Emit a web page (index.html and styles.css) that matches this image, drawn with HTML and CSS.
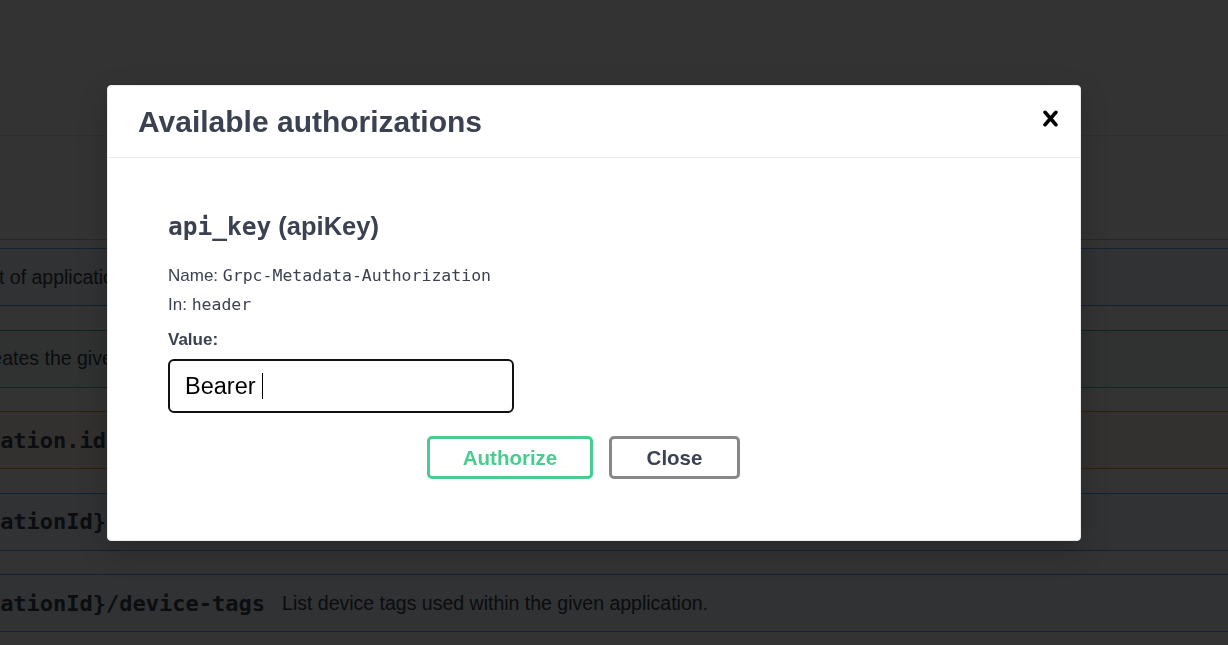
FILE: index.html
```html
<!DOCTYPE html>
<html lang="en">
<head>
<meta charset="utf-8">
<title>Swagger UI - Available authorizations</title>
<link rel="stylesheet" href="styles.css">
</head>
<body>
<div class="page">
  <div class="info"></div>
  <div class="tag"></div>
  <div class="ops">
    <div class="opblock get">
      <span class="method">GET</span>
      <span class="path">/api/applications</span>
      <span class="desc">Get the list of applications.</span>
    </div>
    <div class="opblock post">
      <span class="method">POST</span>
      <span class="path">/api/applications</span>
      <span class="desc">Create creates the given application.</span>
    </div>
    <div class="opblock put">
      <span class="method">PUT</span>
      <span class="path">/api/applications/{application.id}</span>
      <span class="desc">Update updates the given application.</span>
    </div>
    <div class="opblock get">
      <span class="method">GET</span>
      <span class="path">/api/applications/{applicationId}</span>
      <span class="desc">Get returns the application for the given ID.</span>
    </div>
    <div class="opblock get">
      <span class="method">GET</span>
      <span class="path">/api/applications/{applicationId}/device-tags</span>
      <span class="desc">List device tags used within the given application.</span>
    </div>
  </div>
</div>

<div class="backdrop"></div>
<div class="modal-wrap">
  <div class="modal">
    <div class="modal-header">
      <h3 class="modal-title">Available authorizations</h3>
      <button class="close-btn" type="button" aria-label="Close">
        <svg width="31" height="31" viewBox="0 0 20 20" aria-hidden="true">
          <path d="M14.348 14.849c-.469.469-1.229.469-1.697 0L10 11.819l-2.651 3.029c-.469.469-1.229.469-1.697 0-.469-.469-.469-1.229 0-1.697l2.758-3.15-2.759-3.152c-.469-.469-.469-1.228 0-1.697.469-.469 1.228-.469 1.697 0L10 8.183l2.651-3.031c.469-.469 1.228-.469 1.697 0 .469.469.469 1.229 0 1.697l-2.758 3.152 2.758 3.15c.469.469.469 1.229 0 1.698z" fill="#000"/>
        </svg>
      </button>
    </div>
    <div class="modal-body">
      <h4 class="auth-title"><code>api_key</code> (apiKey)</h4>
      <p class="meta first">Name: <code>Grpc-Metadata-Authorization</code></p>
      <p class="meta">In: <code>header</code></p>
      <label class="value-label">Value:</label>
      <div class="value-input"><span>Bearer</span><span class="caret"></span></div>
      <div class="btn-row">
        <button class="btn authorize" type="button">Authorize</button>
        <button class="btn close" type="button">Close</button>
      </div>
    </div>
  </div>
</div>
</body>
</html>
```

FILE: styles.css
```css
html, body {
  margin: 0;
  padding: 0;
  overflow: hidden;
  background: #fff;
  font-family: "Liberation Sans", Arial, sans-serif;
  color: #3b4151;
}

.page {
  width: 100%;
}

.info {
  height: 135px;
  background: #fff;
  box-shadow: 0 1px 2px 0 rgba(0, 0, 0, 0.15);
  position: relative;
}

.tag {
  height: 104px;
  border-bottom: 1px solid rgba(59, 65, 81, 0.3);
}

.ops {
  margin-top: 8px;
  margin-left: -465px;
  margin-right: -40px;
}

.opblock {
  box-sizing: border-box;
  height: 58px;
  margin-bottom: 23.5px;
  display: flex;
  align-items: center;
  padding: 0 7px;
  border: 1px solid;
  border-radius: 5px;
  box-shadow: 0 0 2px rgba(0, 0, 0, 0.12);
  white-space: nowrap;
}

.opblock.get { background: rgba(97, 175, 254, 0.1); border-color: #61affe; }
.opblock.post { background: rgba(73, 204, 144, 0.1); border-color: #49cc90; }
.opblock.put { background: rgba(252, 161, 48, 0.1); border-color: #fca130; }

.method {
  width: 112px;
  flex: none;
  text-align: center;
  color: #fff;
  font-weight: bold;
  font-size: 19.5px;
  padding: 8px 0;
  border-radius: 4px;
}
.get .method { background: #61affe; }
.post .method { background: #49cc90; }
.put .method { background: #fca130; }

.path {
  font-family: "DejaVu Sans Mono", monospace;
  font-weight: bold;
  font-size: 22px;
  padding: 0 17px 0 14px;
  color: #3b4151;
}

.desc {
  font-size: 19.5px;
  color: #3b4151;
}

/* overlay + modal */
.backdrop {
  position: fixed;
  inset: 0;
  background: rgba(0, 0, 0, 0.8);
}

.modal-wrap {
  position: fixed;
  inset: 0;
  padding: 85px 0 0 107px;
}

.modal {
  box-sizing: border-box;
  width: 974px;
  background: #fff;
  border: 1px solid #ebebeb;
  border-radius: 4px;
  box-shadow: 0 10px 30px 0 rgba(0, 0, 0, 0.2);
}

.modal-header {
  height: 71px;
  display: flex;
  align-items: center;
  justify-content: space-between;
  padding: 0 14px 0 30px;
  border-bottom: 1px solid #ebebeb;
}

.modal-title {
  margin: 0;
  font-size: 30px;
  line-height: 34px;
  font-weight: bold;
  color: #3b4151;
}

.close-btn {
  border: none;
  background: none;
  padding: 0;
  margin: 0 0 6px 0;
  width: 31px;
  height: 31px;
  display: flex;
  cursor: pointer;
}

.modal-body {
  padding: 53px 60px 61px 60px;
}

.auth-title {
  margin: 0;
  font-size: 25.5px;
  line-height: 30px;
  font-weight: bold;
  color: #3b4151;
}

.auth-title code {
  font-family: "DejaVu Sans Mono", monospace;
  font-size: 24.5px;
  font-weight: bold;
}

.meta {
  margin: 0;
  font-size: 17px;
  line-height: 29px;
  color: #3b4151;
}

.meta.first {
  margin-top: 19px;
}

.meta code {
  font-family: "DejaVu Sans Mono", monospace;
  font-size: 16.5px;
}

.value-label {
  display: block;
  margin-top: 11px;
  font-size: 17px;
  line-height: 20px;
  font-weight: bold;
  color: #3b4151;
}

.value-input {
  box-sizing: border-box;
  margin-top: 9px;
  width: 346px;
  height: 54px;
  border: 2px solid #111;
  border-radius: 6px;
  padding: 0 15px;
  display: flex;
  align-items: center;
  font-size: 23.5px;
  color: #000;
}

.caret {
  display: inline-block;
  width: 1.5px;
  height: 26px;
  background: #000;
  margin-left: 6px;
}

.btn-row {
  margin-top: 23px;
  display: flex;
  justify-content: center;
  gap: 16px;
  padding-right: 21px;
}

.btn {
  box-sizing: border-box;
  height: 43px;
  border: 3px solid;
  border-radius: 5px;
  background: transparent;
  font-family: "Liberation Sans", Arial, sans-serif;
  font-weight: bold;
  font-size: 20.5px;
  padding: 0;
  cursor: pointer;
}

.btn.authorize {
  width: 166px;
  color: #49cc90;
  border-color: #49cc90;
}

.btn.close {
  width: 131px;
  color: #3b4151;
  border-color: #888;
}
```
